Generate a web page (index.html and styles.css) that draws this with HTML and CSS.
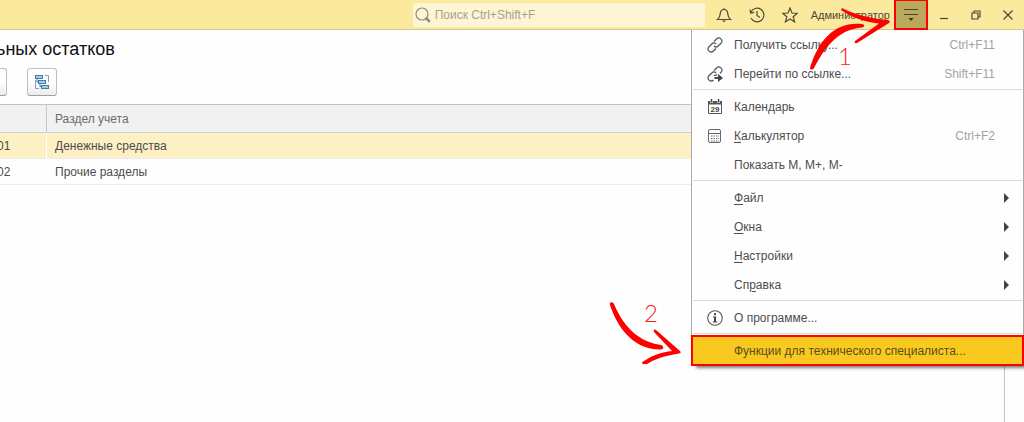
FILE: index.html
```html
<!DOCTYPE html>
<html lang="ru">
<head>
    <meta charset="UTF-8">
    <meta name="viewport" content="width=device-width, initial-scale=1.0">
    <title>Ввод начальных остатков</title>
    <link rel="stylesheet" href="styles.css">
</head>
<body>

    <!-- Application bar -->
    <header class="topbar">
        <div class="search">
            <svg class="search-icon" width="16" height="16" viewBox="0 0 16 16">
                <circle cx="7" cy="7" r="6" fill="none" stroke="#8f8c7c" stroke-width="1.2"/>
                <path d="M11.5 11.5 L14 14" stroke="#8f8c7c" stroke-width="2.6" stroke-linecap="round"/>
            </svg>
            <input type="text" aria-label="Поиск" placeholder="Поиск Ctrl+Shift+F">
        </div>
        <button class="tool" aria-label="Уведомления">
            <svg width="16" height="16" viewBox="0 0 16 16" fill="none" stroke="#4d4a3a" stroke-width="1.2">
                <path d="M8 1.2 V2.5 M1.5 12.5 C3.5 11 4 9.500 4.200 7 C4.400 4 5.700 2.500 8 2.500 C10.300 2.500 11.600 4 11.800 7 C12 9.500 12.500 11 14.500 12.500 Z"/>
                <path d="M6 13.500 H10 L8 15.300 Z" fill="#4d4a3a" stroke="none"/>
            </svg>
        </button>
        <button class="tool" aria-label="История">
            <svg width="16" height="16" viewBox="0 0 16 16" fill="none" stroke="#4d4a3a" stroke-width="1.2">
                <path d="M1.800 5.500 A6.800 6.800 0 1 1 2 11"/>
                <path d="M1 2.500 L1.600 6 L5.200 5.400"/>
                <path d="M8 4 V8.500 L11 10.500"/>
            </svg>
        </button>
        <button class="tool" aria-label="Избранное">
            <svg width="16" height="16" viewBox="0 0 16 16" fill="none" stroke="#4d4a3a" stroke-width="1.2">
                <path d="M8 1 L10 6 L15.300 6.300 L11.200 9.700 L12.600 14.900 L8 12 L3.400 14.900 L4.800 9.700 L0.700 6.300 L6 6 Z"/>
            </svg>
        </button>
        <a class="user" href="#">Администратор</a>
        <button class="menu-button" aria-label="Сервис и настройки">
            <svg width="16" height="14" viewBox="0 0 16 14">
                <path d="M1 1.500 H15 M1 6.500 H15" stroke="#4a4325" stroke-width="1.200"/>
                <path d="M5.500 10 H10.500 L8 13 Z" fill="#3a3420"/>
            </svg>
        </button>
        <button class="window-button" aria-label="Свернуть">
            <svg width="10" height="10" viewBox="0 0 10 10"><path d="M1 8.500 H9" stroke="#4d4a3a" stroke-width="1.200"/></svg>
        </button>
        <button class="window-button" aria-label="Восстановить">
            <svg width="10" height="10" viewBox="0 0 10 10" fill="none" stroke="#4d4a3a" stroke-width="1.200">
                <path d="M1 3 H7 V9 H1 Z M3 3 V1 H9 V7 H7"/>
            </svg>
        </button>
        <button class="window-button" aria-label="Закрыть">
            <svg width="10" height="10" viewBox="0 0 10 10"><path d="M0.500 0.500 L9.500 9.500 M9.500 0.500 L0.500 9.500" stroke="#4d4a3a" stroke-width="1.200"/></svg>
        </button>
    </header>

    <!-- List form -->
    <main class="form">
        <h1>ьных остатков</h1>
        <div class="toolbar">
            <button class="form-button narrow" aria-label="Действия"></button>
            <button class="form-button" aria-label="Просмотр списка">
                <svg width="16" height="16" viewBox="0 0 16 16">
                    <path d="M1.500 6 V14.500 H5 M11 1.500 H14.500 V8" fill="none" stroke="#7da3ba" stroke-width="1"/>
                    <path d="M3 4 V8 H5 M6 8 V12.500 H9" fill="none" stroke="#3f7fa8" stroke-width="1"/>
                    <g fill="#a6cbe0" stroke="#3f7fa8">
                        <rect x="1.500" y="1.500" width="7" height="3"/>
                        <rect x="4.500" y="6.500" width="7" height="3"/>
                        <rect x="7.500" y="11.500" width="7" height="3"/>
                    </g>
                </svg>
            </button>
        </div>
        <table class="list">
            <thead>
                <tr><th class="code"></th><th>Раздел учета</th></tr>
            </thead>
            <tbody>
                <tr class="selected"><td class="code">01</td><td>Денежные средства</td></tr>
                <tr><td class="code">02</td><td>Прочие разделы</td></tr>
            </tbody>
        </table>
    </main>

    <!-- Service menu -->
    <nav class="menu">
        <button class="item">
            <svg class="icon" width="16" height="16" viewBox="0 0 16 16" fill="none" stroke="#555" stroke-width="1.200">
                <path d="M7 4.500 L9.500 2 A3 3 0 0 1 14 6.300 L11.200 9 A3 3 0 0 1 7 9"/>
                <path d="M9 11.500 L6.500 14 A3 3 0 0 1 2 9.700 L4.800 7 A3 3 0 0 1 9 7"/>
            </svg>
            <span>Получить ссылку...</span><kbd>Ctrl+F11</kbd>
        </button>
        <button class="item">
            <svg class="icon" width="16" height="16" viewBox="0 0 16 16" fill="none" stroke="#555" stroke-width="1.200">
                <path d="M7 4.500 L9.500 2 A3 3 0 0 1 14 6.300 L13 7.500 M10 8.500 C9 9.700 7.700 9.700 7 9"/>
                <path d="M6.500 14 A3 3 0 0 1 2 9.700 L4.800 7 A3 3 0 0 1 9 7"/>
                <path d="M7.500 11 H11 V8 L16 12 L11 16 V13 H7.500 Z" fill="#444" stroke="none"/>
            </svg>
            <span>Перейти по ссылке...</span><kbd>Shift+F11</kbd>
        </button>
        <hr>
        <button class="item">
            <svg class="icon" width="16" height="16" viewBox="0 0 16 16">
                <path d="M1.500 2.500 H14.500 V14.500 H1.500 Z" fill="#fff" stroke="#555"/>
                <path d="M1 2 H15 V5.500 H1 Z" fill="#555"/>
                <path d="M4.500 0 V4 M11.500 0 V4" stroke="#fff" stroke-width="2.500"/>
                <path d="M4.500 0 V3.500 M11.500 0 V3.500" stroke="#444" stroke-width="1.500"/>
                <text class="day" x="8" y="13" text-anchor="middle">29</text>
            </svg>
            <span>Календарь</span>
        </button>
        <button class="item">
            <svg class="icon" width="16" height="16" viewBox="0 0 16 16" fill="none" stroke="#666">
                <rect x="1.500" y="1.500" width="12" height="13" rx="1.500"/>
                <path d="M1.500 5.500 H13.500"/>
                <path d="M4 8 H12 M4 10.500 H12 M4 13 H12" stroke-dasharray="1.500 1"/>
            </svg>
            <span><u>К</u>алькулятор</span><kbd>Ctrl+F2</kbd>
        </button>
        <button class="item"><span>Показать M, M+, M-</span></button>
        <hr>
        <button class="item submenu"><span><u>Ф</u>айл</span></button>
        <button class="item submenu"><span><u>О</u>кна</span></button>
        <button class="item submenu"><span><u>Н</u>астройки</span></button>
        <button class="item submenu"><span>Сп<u>р</u>авка</span></button>
        <hr>
        <button class="item">
            <svg class="icon" width="16" height="16" viewBox="0 0 16 16">
                <circle cx="8" cy="8" r="7.300" fill="none" stroke="#555" stroke-width="1.100"/>
                <path d="M6 6.500 H9 V11.500 H10.300 V12.500 H5.800 V11.500 H7 V7.500 H6 Z M7 3.300 H9 V5.200 H7 Z" fill="#444"/>
            </svg>
            <span>О программе...</span>
        </button>
        <hr>
        <button class="item active"><span>Функции для технического специалиста...</span></button>
    </nav>

    <!-- Step marks -->
    <div class="step step-one">
        <svg width="80" height="62" viewBox="0 0 80 62" fill="#fe0000">
            <path d="M0 60 C9 29 28 13 52 16 C55 16.500 55 19 52 19.500 C31 21 17 35 4 60 C3 62 0 62 0 60 Z"/>
            <path d="M32 0 C44 6 58 10 78 12 C80 12.500 80 14 79 15 L47 35 C45 36 44 34 45 33 L69 15.500 C54 14 41 9 31 2 Z"/>
        </svg>
        <span>1</span>
    </div>
    <div class="step step-two">
        <svg width="74" height="64" viewBox="0 0 74 64" fill="#fe0000">
            <path d="M0 1 C1 0 3 0 4 2 C15 28 31 40 51 43 C54 44 54 47 51 47.500 C29 48 10 33 0 3 Z"/>
            <path d="M46 28 L70 49 C71 50 71 51.500 69 51.500 C54 54 45 57 37 62 L33 62 C31 61 32 60 34 59 C43 53 52 50 62 49 L44 30 C43 27 45 27 46 28 Z"/>
        </svg>
        <span>2</span>
    </div>

</body>
</html>
```
FILE: styles.css
```css
* {
    box-sizing: border-box;
}

body {
    font-family: "Liberation Sans", Arial, sans-serif;
    font-size: 12px;
    color: #4d4d4d;
    margin: 0;
    min-height: 100vh;
    display: flex;
    flex-direction: column;
    background-color: #fefefe;
    overflow: hidden;
    position: relative;
}

button {
    font: inherit;
    color: inherit;
    border: 0;
    padding: 0;
    background: none;
    cursor: pointer;
}

svg {
    display: block;
    flex: none;
}

/* Application bar */
.topbar {
    height: 30px;
    display: flex;
    justify-content: flex-end;
    align-items: center;
    background-color: #fbe99d;
    border-bottom: 1px solid #d3c88f;
}

.search {
    width: 292px;
    height: 24px;
    display: flex;
    align-items: center;
    gap: 4px;
    padding-left: 2px;
    margin-right: 3px;
    background-color: #fdf5d3;
    border-radius: 2px;
}

.search input {
    flex: 1;
    min-width: 0;
    border: 0;
    padding: 0;
    background: none;
    font: inherit;
}

.search input::placeholder {
    color: #a5a292;
}

.tool {
    width: 33px;
    height: 28px;
    display: flex;
    justify-content: center;
    align-items: center;
}

.user {
    margin: 0 4px;
    font-size: 11px;
    color: #4d4a3a;
    text-decoration: none;
}

.menu-button {
    width: 34px;
    height: 31px;
    display: flex;
    justify-content: center;
    align-items: center;
    background-color: #baa95a;
    border: 2px solid #fe0000;
    z-index: 2;
}

.window-button {
    width: 32px;
    height: 28px;
    display: flex;
    justify-content: center;
    align-items: center;
}

/* List form */
.form {
    flex: 1;
    margin-left: -4px;
    margin-right: 19px;
    border-right: 1px solid #c4c4c4;
}

h1 {
    margin: 8px 0;
    font-size: 18px;
    line-height: 22px;
    font-weight: normal;
    color: #111;
}

.toolbar {
    display: flex;
    gap: 20px;
    margin-bottom: 8px;
}

.form-button {
    width: 30px;
    height: 28px;
    display: flex;
    justify-content: center;
    align-items: center;
    background: linear-gradient(#fff 50%, #ececec);
    border: 1px solid #c0c0c0;
    border-bottom-color: #a0a0a0;
    border-radius: 3px;
}

.form-button.narrow {
    width: 11px;
    border-left: 0;
}

.list {
    width: 100%;
    border-collapse: separate;
    border-spacing: 0;
    border-top: 1px solid #c4c4c4;
}

.list th,
.list td {
    height: 26px;
    padding: 0 8px;
    text-align: left;
    border-bottom: 1px solid #ececec;
}

.list th {
    height: 28px;
    font-weight: normal;
    color: #6b6b6b;
    background-color: #f1f1f1;
    border-bottom-color: #cfcfcf;
}

.list .code {
    width: 51px;
    padding: 0 0 0 1px;
    border-right: 1px solid #fff;
}

.list th.code {
    border-right-color: #c9c9c9;
}

.selected td {
    background-color: #fdf0c5;
}

/* Service menu */
.menu {
    position: absolute;
    top: 30px;
    right: 0;
    width: 333px;
    display: flex;
    flex-direction: column;
    background-color: #fefefe;
    border: solid #a9a9a9;
    border-width: 0 1px;
    box-shadow: 4px 4px 3px -1px rgba(0, 0, 0, 0.5);
}

.menu hr {
    width: calc(100% - 2px);
    margin: 1px 1px 2px;
    border: 0;
    border-top: 1px solid #dedccf;
}

.item {
    position: relative;
    height: 29px;
    display: flex;
    align-items: center;
    padding: 0 28px 0 42px;
    text-align: left;
}

.item .icon {
    position: absolute;
    left: 15px;
}

.item kbd {
    margin-left: auto;
    font: inherit;
    color: #a3a3a3;
}

.item u {
    text-underline-offset: 2px;
}

.submenu {
    padding-right: 14px;
}

.submenu::after {
    content: "";
    margin-left: auto;
    border: solid transparent;
    border-width: 5px 0 5px 5px;
    border-left-color: #444;
}

.item.active {
    background-color: #f9c91f;
    color: #5a4d1c;
    outline: 2px solid #fe0000;
    outline-offset: -1px;
}

.day {
    font-size: 8px;
    font-weight: bold;
    fill: #444;
}

/* Step marks */
.step {
    position: absolute;
    z-index: 3;
    pointer-events: none;
    color: #fe2020;
    font-family: Lato, "Open Sans", sans-serif;
    font-size: 24px;
    font-weight: 300;
    line-height: 24px;
}

.step span {
    position: absolute;
}

.step-one {
    top: 8px;
    right: 134px;
}

.step-one span {
    left: 28px;
    top: 36px;
}

.step-two {
    top: 302px;
    right: 340px;
}

.step-two span {
    left: 34px;
    top: -1px;
}
```
